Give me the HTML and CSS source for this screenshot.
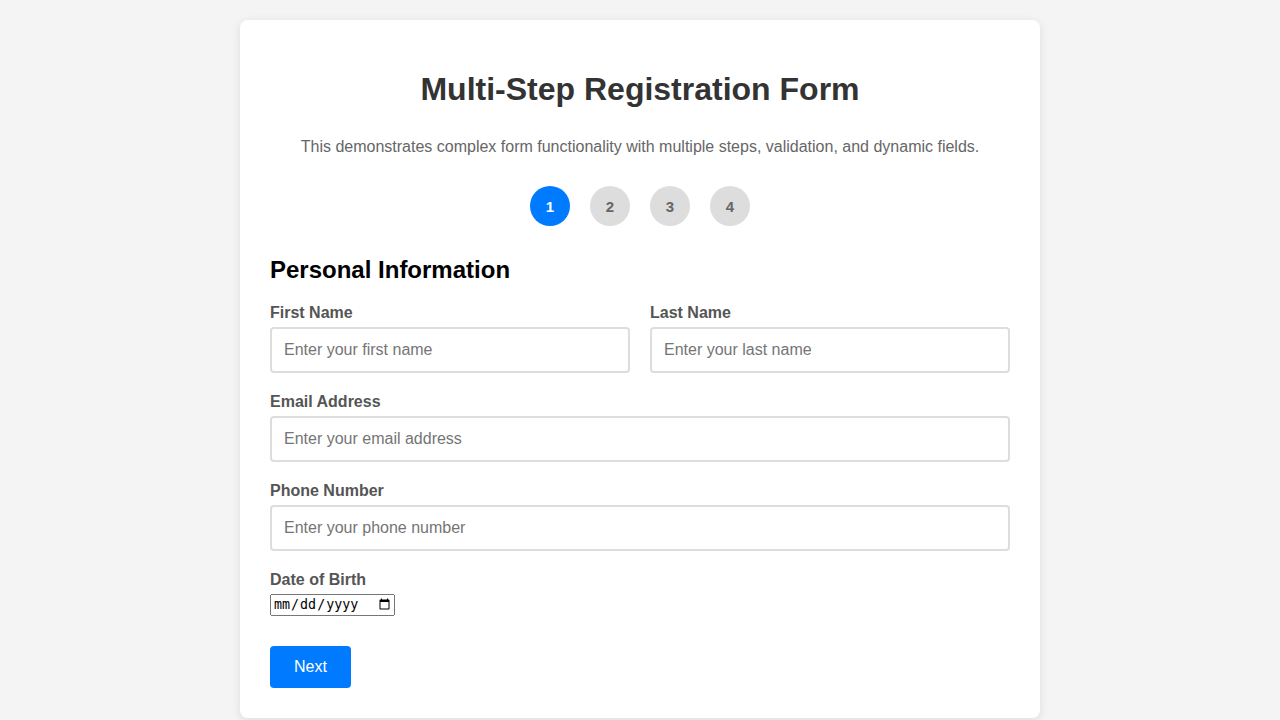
FILE: index.html
```html
<!DOCTYPE html>
<html lang="en-GB">
<head>
<meta charset="utf-8">
<title>Multi-Step Registration Form</title>
<link rel="stylesheet" href="styles.css">
</head>
<body>
<div class="container">
  <h1 class="title">Multi-Step Registration Form</h1>
  <p class="intro">This demonstrates complex form functionality with multiple steps, validation, and dynamic fields.</p>
  <div class="steps">
    <div class="step active">1</div>
    <div class="step">2</div>
    <div class="step">3</div>
    <div class="step">4</div>
  </div>
  <form class="form">
    <h2 class="section-title">Personal Information</h2>
    <div class="row">
      <div class="group">
        <label class="label" for="first">First Name</label>
        <input class="field" id="first" type="text" placeholder="Enter your first name">
      </div>
      <div class="group">
        <label class="label" for="last">Last Name</label>
        <input class="field" id="last" type="text" placeholder="Enter your last name">
      </div>
    </div>
    <div class="group">
      <label class="label" for="email">Email Address</label>
      <input class="field" id="email" type="email" placeholder="Enter your email address">
    </div>
    <div class="group">
      <label class="label" for="phone">Phone Number</label>
      <input class="field" id="phone" type="tel" placeholder="Enter your phone number">
    </div>
    <div class="group">
      <label class="label" for="dob">Date of Birth</label>
      <input class="date" id="dob" type="date" lang="en-GB">
    </div>
    <div class="actions">
      <button type="button" class="btn">Next</button>
    </div>
  </form>
</div>
</body>
</html>
```
FILE: styles.css
```css
html, body {
  margin: 0;
  padding: 0;
}
body {
  background: #f4f4f4;
  font-family: "Liberation Sans", Arial, sans-serif;
  padding: 20px;
}
.container {
  max-width: 740px;
  margin: 0 auto;
  background: #fff;
  border-radius: 8px;
  box-shadow: 0 2px 10px rgba(0, 0, 0, 0.1);
  padding: 30px;
}
.title {
  text-align: center;
  color: #333;
  font-size: 32px;
  margin: 21px 0 30px;
}
.intro {
  text-align: center;
  color: #666;
  font-size: 16px;
  margin: 0 0 30px;
}
.steps {
  display: flex;
  justify-content: center;
  gap: 20px;
  margin-bottom: 30px;
}
.step {
  width: 40px;
  height: 40px;
  border-radius: 50%;
  background: #ddd;
  color: #666;
  font-weight: bold;
  font-size: 15px;
  display: flex;
  align-items: center;
  justify-content: center;
}
.step.active {
  background: #007bff;
  color: #fff;
}
.form {
  margin: 0;
}
.section-title {
  font-size: 24px;
  margin: 0 0 20px;
  color: #000;
}
.row {
  display: flex;
  gap: 20px;
}
.row .group {
  flex: 1;
}
.group {
  margin-bottom: 20px;
}
.label {
  display: block;
  font-weight: bold;
  color: #555;
  font-size: 16px;
  margin-bottom: 5px;
}
.field {
  display: block;
  width: 100%;
  box-sizing: border-box;
  padding: 12px;
  border: 2px solid #ddd;
  border-radius: 4px;
  font-size: 16px;
  font-family: "Liberation Sans", Arial, sans-serif;
  line-height: normal;
}
.field::placeholder {
  color: #757575;
}
.date {
  height: 22px;
  box-sizing: border-box;
}
.actions {
  padding-top: 10px;
}
.btn {
  background: #007bff;
  color: #fff;
  border: none;
  border-radius: 4px;
  padding: 12px 24px;
  font-size: 16px;
  font-family: "Liberation Sans", Arial, sans-serif;
  cursor: pointer;
}
```
